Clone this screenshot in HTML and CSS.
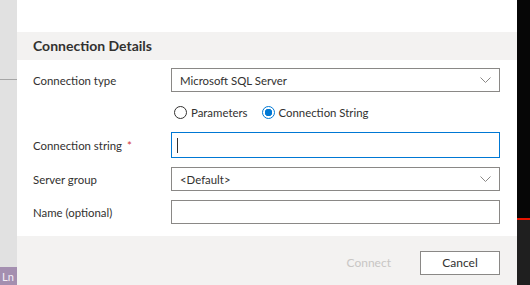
FILE: index.html
```html
<!DOCTYPE html>
<html lang="en">
<head>
    <meta charset="UTF-8">
    <title>Connection Details</title>
    <link rel="stylesheet" href="styles.css">
</head>
<body>
    <div class="app">
        <!-- left editor strip -->
        <div class="sidebar">
            <div class="sidebar-top"></div>
            <div class="sidebar-fill"></div>
            <div class="sidebar-status">Ln</div>
        </div>

        <div class="dialog">
            <div class="dialog-top"></div>
            <div class="dialog-header">Connection Details</div>

            <div class="dialog-body">
                <label class="field-label">Connection type</label>
                <div class="field select">
                    <span>Microsoft SQL Server</span>
                    <svg class="chevron" width="11" height="6" viewBox="0 0 11 6"><polyline points="0.5,0.5 5.5,5.5 10.5,0.5" fill="none" stroke="#8a8886" stroke-width="1"/></svg>
                </div>

                <div></div>
                <div class="radios">
                    <span class="radio"><span class="radio-dot"></span>Parameters</span>
                    <span class="radio checked"><span class="radio-dot"></span>Connection String</span>
                </div>

                <label class="field-label">Connection string <span class="required">*</span></label>
                <div class="field input focused"><span class="caret"></span></div>

                <label class="field-label">Server group</label>
                <div class="field select">
                    <span>&lt;Default&gt;</span>
                    <svg class="chevron" width="11" height="6" viewBox="0 0 11 6"><polyline points="0.5,0.5 5.5,5.5 10.5,0.5" fill="none" stroke="#8a8886" stroke-width="1"/></svg>
                </div>

                <label class="field-label">Name (optional)</label>
                <div class="field input"></div>
            </div>

            <div class="dialog-footer">
                <span class="btn-connect">Connect</span>
                <span class="btn-cancel">Cancel</span>
            </div>
        </div>

        <!-- right window edge -->
        <div class="edge">
            <div class="edge-top"></div>
            <div class="edge-red"></div>
            <div class="edge-bottom"></div>
        </div>
    </div>
</body>
</html>
```

FILE: styles.css
```css
body {
    margin: 0;
    font-family: Lato, "Noto Sans", sans-serif;
    font-size: 11.4px;
    color: #323130;
}

.app {
    display: flex;
    width: 530px;
    height: 285px;
    overflow: hidden;
}

/* Left strip */
.sidebar {
    width: 17px;
    display: flex;
    flex-direction: column;
    background: #e1e1e1;
}

.sidebar-top {
    height: 79px;
    border-bottom: 1px solid #a6a6a6;
}

.sidebar-fill {
    flex: 1;
}

.sidebar-status {
    height: 18px;
    background: #a48fb0;
    color: #f4eef7;
    font-size: 11px;
    line-height: 20px;
    padding-left: 2px;
}

/* Dialog */
.dialog {
    flex: 1;
    display: flex;
    flex-direction: column;
    background: #fff;
}

.dialog-top {
    height: 32px;
}

.dialog-header {
    height: 28px;
    line-height: 28px;
    background: #f3f2f1;
    padding-left: 16px;
    font-size: 14px;
    font-weight: 700;
}

.dialog-body {
    flex: 1;
    display: grid;
    grid-template-columns: 138px 1fr;
    grid-template-rows: 24px 22px 26px 24px 24px;
    row-gap: 9px;
    align-content: start;
    align-items: center;
    padding: 8px 17px 0 16px;
}

.field {
    box-sizing: border-box;
    height: 100%;
    border: 1px solid #8a8886;
    display: flex;
    align-items: center;
    padding: 0 8px;
}

.select {
    justify-content: space-between;
    padding-right: 8px;
}

.focused {
    border-color: #0078d4;
}

.caret {
    width: 1px;
    height: 15px;
    background: #323130;
    margin-left: -3px;
}

.required {
    color: #d13438;
    margin-left: 2px;
}

/* Radios */
.radios {
    display: flex;
    align-items: center;
    gap: 14px;
    padding-left: 3px;
}

.radio {
    display: flex;
    align-items: center;
    gap: 4px;
}

.radio-dot {
    box-sizing: border-box;
    width: 13px;
    height: 13px;
    border: 1px solid #323130;
    border-radius: 50%;
}

.radio.checked .radio-dot {
    border-color: #0078d4;
    background: radial-gradient(circle, #0078d4 0 3.5px, #fff 4px);
}

/* Footer */
.dialog-footer {
    height: 49px;
    background: #f3f2f1;
    display: flex;
    justify-content: flex-end;
    align-items: flex-start;
    padding: 15px 17px 0 0;
    box-sizing: border-box;
}

.btn-connect {
    color: #c8c6c4;
    font-size: 12px;
    line-height: 24px;
    margin-right: 29px;
}

.btn-cancel {
    box-sizing: border-box;
    width: 80px;
    height: 24px;
    line-height: 22px;
    font-size: 12px;
    border: 1px solid #8a8886;
    background: #fff;
    text-align: center;
}

/* Right edge */
.edge {
    width: 13px;
    display: flex;
    flex-direction: column;
}

.edge-top {
    height: 218px;
    background: #060606;
}

.edge-red {
    height: 2px;
    background: #e51400;
}

.edge-bottom {
    flex: 1;
    background: #1f1f1f;
}
```
